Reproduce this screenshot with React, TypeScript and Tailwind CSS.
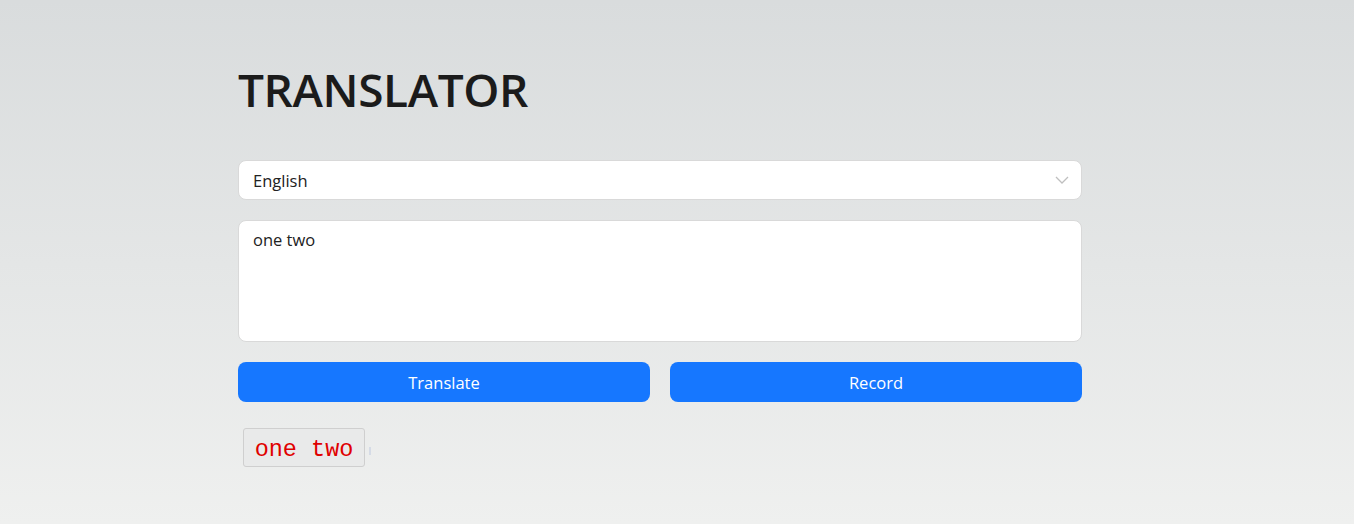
import React from "react";

export default function App() {
  return (
    <div className="min-h-[524px] w-full bg-gradient-to-b from-[#d9dcdd] to-[#eff0ef]" style={{ fontFamily: '"Open Sans", "Noto Sans", sans-serif' }}>
      <div className="ml-[238px] w-[844px] pt-[57px]">
        <h1 className="text-[46px] font-semibold leading-[64px] text-[#1b1b1b] tracking-[-0.4px]">TRANSLATOR</h1>
        <div className="mt-[39px] flex h-[40px] items-center justify-between rounded-[8px] border border-[#d9d9d9] bg-white pl-[14px] pr-[12px] text-[16.5px] text-[#222]">
          <span className="mt-[2px]">English</span>
          <svg width="14" height="14" viewBox="0 0 14 14" fill="none" stroke="#bfbfbf" strokeWidth="1.3">
            <path d="M1 4 L7 10 L13 4" />
          </svg>
        </div>
        <div className="mt-[20px] h-[122px] rounded-[8px] border border-[#d9d9d9] bg-white px-[14px] pt-[7px] text-[16.5px] text-[#222]">
          one two
        </div>
        <div className="mt-[20px] flex gap-[20px]">
          <button className="h-[40px] flex-1 rounded-[8px] bg-[#1677ff] pt-[2px] text-[16.5px] text-white">Translate</button>
          <button className="h-[40px] flex-1 rounded-[8px] bg-[#1677ff] pt-[2px] text-[16.5px] text-white">Record</button>
        </div>
        <div className="mt-[26px] flex items-center pl-[5px]">
          <span className="flex h-[39px] w-[122px] items-center justify-center rounded-[3px] border border-[#cfcfcf] bg-[#e9eaea] pt-[4px] text-[23.5px] text-[#e00000]" style={{ fontFamily: '"Liberation Mono", monospace' }}>
            one two
          </span>
          <span className="ml-[4px] mt-[6px] h-[8px] w-[2px] bg-[#d5dbe6]" />
        </div>
      </div>
    </div>
  );
}
